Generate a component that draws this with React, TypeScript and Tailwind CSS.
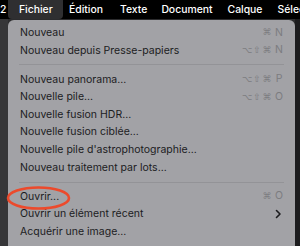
import React from "react";

type Item = { label: string; mods?: string[]; k?: string; sub?: boolean } | "sep";

const items: Item[] = [
  { label: "Nouveau", mods: ["⌘"], k: "N" },
  { label: "Nouveau depuis Presse-papiers", mods: ["⌥", "⇧", "⌘"], k: "N" },
  "sep",
  { label: "Nouveau panorama...", mods: ["⌥", "⇧", "⌘"], k: "P" },
  { label: "Nouvelle pile...", mods: ["⌥", "⇧", "⌘"], k: "O" },
  { label: "Nouvelle fusion HDR..." },
  { label: "Nouvelle fusion ciblée..." },
  { label: "Nouvelle pile d'astrophotographie..." },
  { label: "Nouveau traitement par lots..." },
  "sep",
  { label: "Ouvrir...", mods: ["⌘"], k: "O" },
  { label: "Ouvrir un élément récent", sub: true },
  { label: "Acquérir une image..." },
  "sep",
];

function Shortcut({ mods, k }: { mods: string[]; k: string }) {
  return (
    <span className="flex items-center text-[#7c7c80]">
      {mods.map((m, i) => (
        <span key={i} className="flex w-[10px] justify-center font-['DejaVu_Sans'] text-[9px] leading-none">
          {m}
        </span>
      ))}
      <span className="ml-[3px] w-[8px] text-center text-[10.5px] leading-none">{k}</span>
    </span>
  );
}

export default function App() {
  return (
    <div className="relative h-[246px] w-[300px] overflow-hidden bg-[#2c2c2e] font-['Inter']">
      {/* menu bar */}
      <div className="flex h-[19px] items-center overflow-hidden bg-black text-[10.4px] font-medium text-white">
        <span className="w-[8px] shrink-0 overflow-hidden pr-[3px] text-right">2</span>
        <span className="flex h-[19px] w-[55px] shrink-0 items-center rounded-b-[4px] bg-[#2f2f31] pl-[11px]">
          Fichier
        </span>
        <span className="ml-[6px] shrink-0">Édition</span>
        <span className="ml-[17px] shrink-0">Texte</span>
        <span className="ml-[14px] shrink-0">Document</span>
        <span className="ml-[15px] shrink-0">Calque</span>
        <span className="ml-[15px] shrink-0 whitespace-nowrap">Sélection</span>
      </div>
      <div className="flex">
        <div className="h-[227px] w-[8px] shrink-0 bg-[#363638]" />
        <div className="mt-[1px] h-[240px] w-[287px] shrink-0 rounded-t-[6px] bg-[#a2a2a6] pt-[4px] text-[10.5px] text-[#1c1c1e]">
          {items.map((it, i) =>
            it === "sep" ? (
              <div key={i} className="flex h-[11.5px] items-center px-[11px]">
                <div className="h-px w-full bg-[#939397]" />
              </div>
            ) : (
              <div key={i} className="flex h-[17.6px] items-center justify-between pl-[12px] pr-[12px]">
                <span className="whitespace-nowrap">{it.label}</span>
                {it.mods && it.k && <Shortcut mods={it.mods} k={it.k} />}
                {it.sub && (
                  <svg width="7" height="10" viewBox="0 0 7 10" className="mr-[1px]">
                    <path
                      d="M1.5 1.5 L5 5 L1.5 8.5"
                      fill="none"
                      stroke="#1c1c1e"
                      strokeWidth="1.6"
                      strokeLinecap="round"
                      strokeLinejoin="round"
                    />
                  </svg>
                )}
              </div>
            )
          )}
        </div>
        <div className="h-[227px] flex-1 bg-[#1c1c1e]" />
      </div>
      {/* red annotation ellipse */}
      <svg className="pointer-events-none absolute left-0 top-0" width="300" height="246" viewBox="0 0 300 246">
        <ellipse cx="38.5" cy="198" rx="30.5" ry="10.5" fill="none" stroke="#ec4a2c" strokeWidth="2.6" />
      </svg>
    </div>
  );
}
